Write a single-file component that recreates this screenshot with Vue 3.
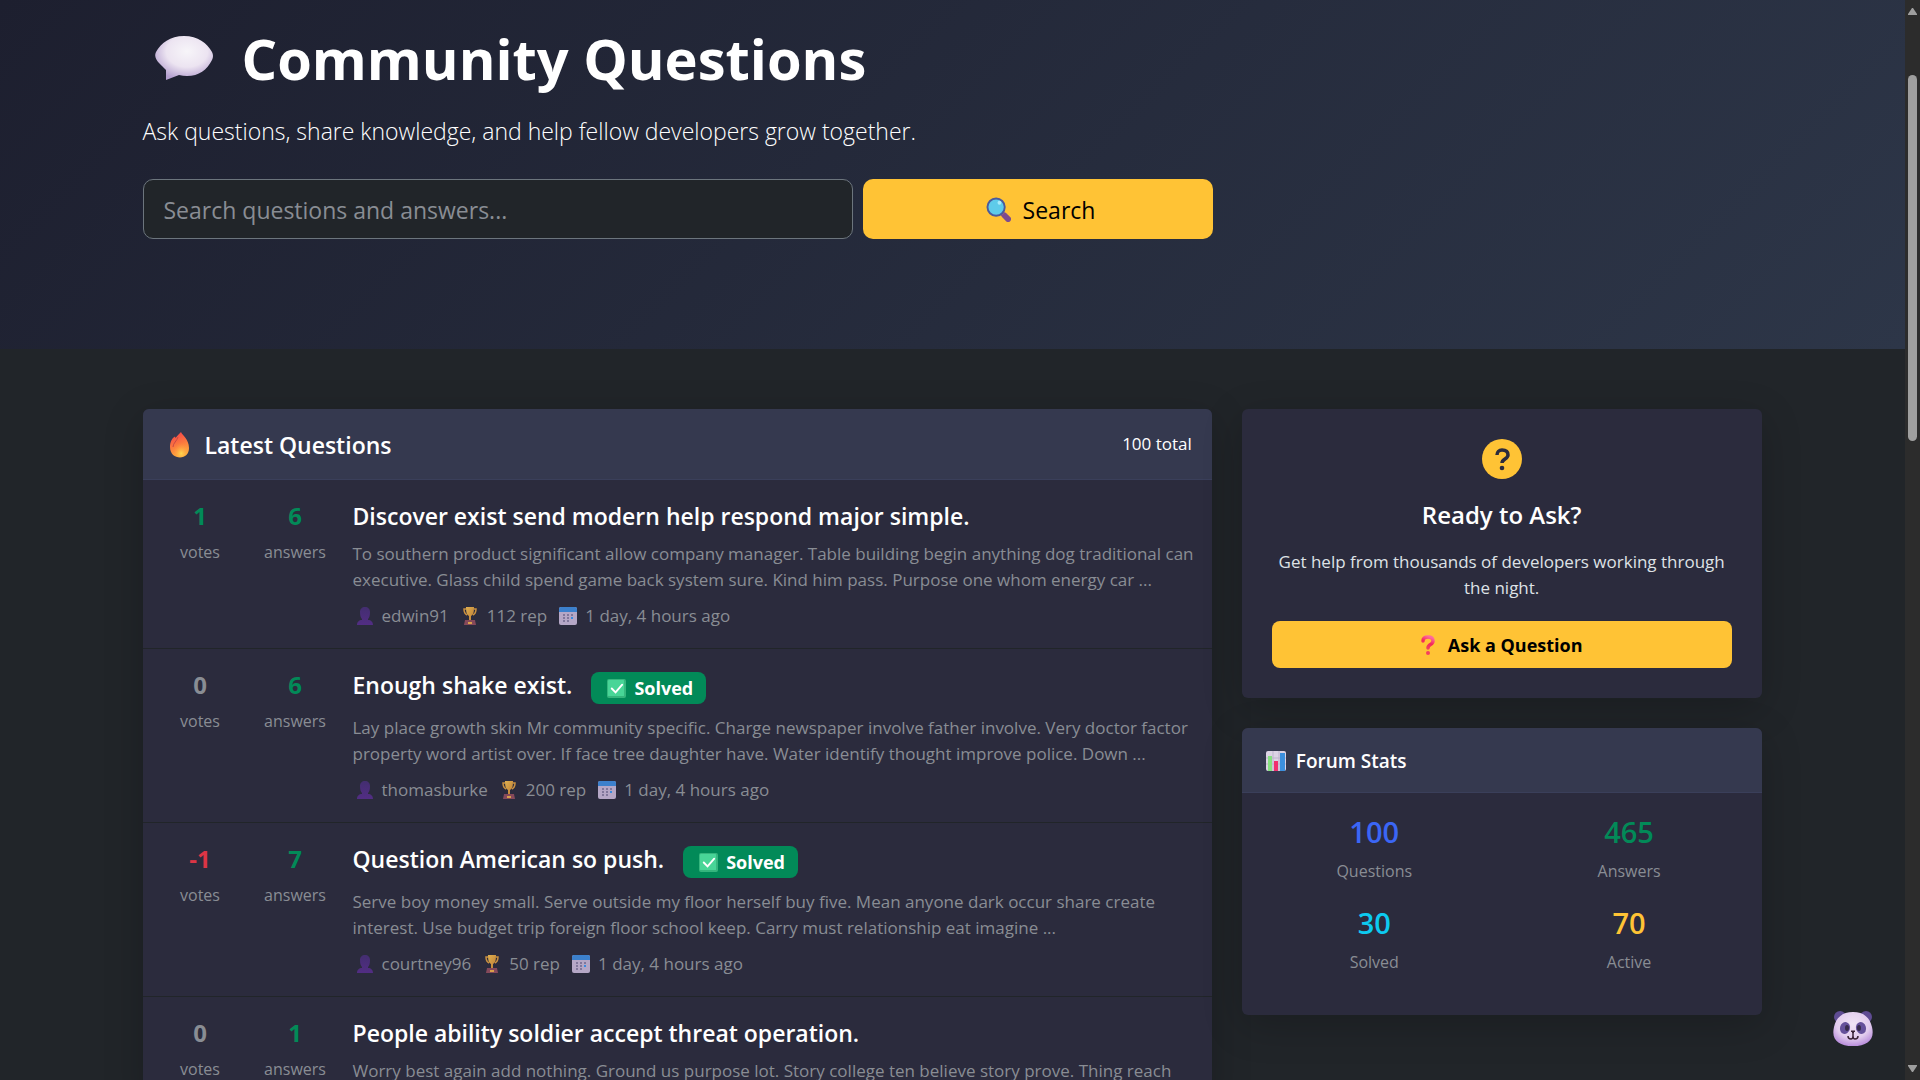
<script setup>
const questions = [
  {
    votes: '1', voteTone: 'good', answers: '6', solved: false,
    title: 'Discover exist send modern help respond major simple.',
    text: 'To southern product significant allow company manager. Table building begin anything dog traditional can\nexecutive. Glass child spend game back system sure. Kind him pass. Purpose one whom energy car ...',
    user: 'edwin91', rep: '112 rep', when: '1 day, 4 hours ago'
  },
  {
    votes: '0', voteTone: 'muted', answers: '6', solved: true,
    title: 'Enough shake exist.',
    text: 'Lay place growth skin Mr community specific. Charge newspaper involve father involve. Very doctor factor\nproperty word artist over. If face tree daughter have. Water identify thought improve police. Down ...',
    user: 'thomasburke', rep: '200 rep', when: '1 day, 4 hours ago'
  },
  {
    votes: '-1', voteTone: 'bad', answers: '7', solved: true,
    title: 'Question American so push.',
    text: 'Serve boy money small. Serve outside my floor herself buy five. Mean anyone dark occur share create\ninterest. Use budget trip foreign floor school keep. Carry must relationship eat imagine ...',
    user: 'courtney96', rep: '50 rep', when: '1 day, 4 hours ago'
  },
  {
    votes: '0', voteTone: 'muted', answers: '1', solved: false,
    title: 'People ability soldier accept threat operation.',
    text: 'Worry best again add nothing. Ground us purpose lot. Story college ten believe story prove. Thing reach',
    user: '', rep: '', when: ''
  }
]

const stats = [
  { value: '100', label: 'Questions', tone: 'blue' },
  { value: '465', label: 'Answers', tone: 'good' },
  { value: '30', label: 'Solved', tone: 'cyan' },
  { value: '70', label: 'Active', tone: 'amber' }
]
</script>

<template>
  <div class="page">
    <svg class="defs" width="0" height="0" aria-hidden="true">
      <defs>
        <radialGradient id="gBubble" cx="0.55" cy="0.35" r="0.65">
          <stop offset="0" stop-color="#f7f5f9" /><stop offset="0.55" stop-color="#ece4f1" /><stop offset="1" stop-color="#b49fcf" />
        </radialGradient>
        <linearGradient id="gFlame" x1="0.3" y1="0" x2="0.6" y2="1">
          <stop offset="0" stop-color="#f5424a" /><stop offset="0.5" stop-color="#fb7a3e" /><stop offset="1" stop-color="#ffb43c" />
        </linearGradient>
        <radialGradient id="gFlameIn" cx="0.55" cy="0.8" r="0.6">
          <stop offset="0" stop-color="#ffd94f" /><stop offset="1" stop-color="#ff8a3c" stop-opacity="0" />
        </radialGradient>
        <linearGradient id="gPerson" x1="0" y1="0" x2="0" y2="1">
          <stop offset="0" stop-color="#432e70" /><stop offset="1" stop-color="#522d84" />
        </linearGradient>
        <linearGradient id="gCup" x1="0" y1="0" x2="1" y2="1">
          <stop offset="0" stop-color="#e0b050" /><stop offset="1" stop-color="#bd7d34" />
        </linearGradient>
        <linearGradient id="gRed" x1="0.7" y1="0" x2="0.3" y2="1">
          <stop offset="0" stop-color="#ff6a9c" /><stop offset="0.5" stop-color="#f5265a" /><stop offset="1" stop-color="#f0405a" />
        </linearGradient>
        <radialGradient id="gPanda" cx="0.5" cy="0.35" r="0.7">
          <stop offset="0" stop-color="#f0e4f5" /><stop offset="0.6" stop-color="#e2cdee" /><stop offset="1" stop-color="#b283d8" />
        </radialGradient>
      </defs>
    </svg>

    <div class="content">
      <header class="hero">
        <div class="container">
          <div class="hero-inner">
            <h1>
              <svg class="bubble" viewBox="0 0 58 44" aria-hidden="true">
                <path fill="url(#gBubble)" d="M29 0C15 0 6 7 1 16c-2 4 0 8 3 11l7 7v10l13-5q4 1 8 1c12 0 20-6 25-16q2-4 0-8C52 7 43 0 29 0z" />
              </svg>
              <span>Community Questions</span>
            </h1>
            <p class="lead">Ask questions, share knowledge, and help fellow developers grow together.</p>
            <form class="search" @submit.prevent>
              <input type="text" aria-label="Search questions and answers" placeholder="Search questions and answers..." />
              <button type="submit">
                <svg class="glass" viewBox="0 0 26 26" aria-hidden="true">
                  <path d="M19 19l4 4" stroke="#7d4b90" stroke-width="6" stroke-linecap="round" />
                  <path d="M15 15l3 3" stroke="#a65b86" stroke-width="3" />
                  <circle cx="10.500" cy="10.500" r="9" fill="#5ecbea" stroke="#4b5a9c" stroke-width="2" />
                  <circle cx="14" cy="6" r="2" fill="#a9ebfa" />
                </svg>
                <span>Search</span>
              </button>
            </form>
          </div>
        </div>
      </header>

      <main class="container columns">
        <section class="card">
          <div class="card-head">
            <h2>
              <svg class="flame" viewBox="0 0 20 26" aria-hidden="true">
                <path fill="url(#gFlame)" d="M11 0c1 3 8 7 8 16 0 6-4 9.500-9 9.500S0 22 0 15c0-5 2-9 5-10.500L5.500 6C7 4 9 2 11 0z" />
                <path fill="url(#gFlameIn)" d="M12 7c3 3 6 6 6 10s-3 8-8 8-7-4-7-8c0-5 5-5 9-10z" />
                <path d="M8 5c-1 4-5 6-5 10" fill="none" stroke="#c84a44" stroke-width="1" />
              </svg>
              <span>Latest Questions</span>
            </h2>
            <span class="total">100 total</span>
          </div>

          <article v-for="q in questions" :key="q.title" class="question">
            <div class="count"><strong :class="q.voteTone">{{ q.votes }}</strong><span>votes</span></div>
            <div class="count"><strong class="good">{{ q.answers }}</strong><span>answers</span></div>
            <div class="body">
              <h3>
                <a href="#">{{ q.title }}</a>
                <span v-if="q.solved" class="badge">
                  <svg viewBox="0 0 20 20" aria-hidden="true">
                    <rect width="20" height="20" rx="2" fill="#35b57d" />
                    <rect x="1" y="1" width="17" height="17" rx="1" fill="#48d597" />
                    <path d="M5 10l4 4 7-8" fill="none" stroke="#fff" stroke-width="2" stroke-linecap="round" />
                  </svg>
                  <span>Solved</span>
                </span>
              </h3>
              <p>{{ q.text }}</p>
              <div v-if="q.user" class="meta">
                <span class="who">
                  <svg viewBox="0 0 18 18" aria-hidden="true">
                    <path fill="url(#gPerson)" d="M9 0c3 0 5 2 5 5 0 4-1 6-2 7v1c3 0 5 2 5 5H1c0-3 2-5 5-5v-1C5 11 4 9 4 5c0-3 2-5 5-5z" />
                  </svg>{{ q.user }}
                </span>
                <span class="rep">
                  <svg viewBox="0 0 18 18" aria-hidden="true">
                    <path d="M5 2H3c0 4 1 5 3 6M13 2h2c0 4-1 5-3 6" fill="none" stroke="#c99040" stroke-width="1.500" />
                    <path fill="url(#gCup)" d="M5 0h8c0 6-1 8-3 9v4H8V9C6 8 5 6 5 0z" />
                    <path fill="#85495a" d="M4 13h10l1 5H3z" /><path fill="#d8a04a" d="M7 15h4v2H7z" />
                  </svg>{{ q.rep }}
                </span>
                <span class="when">
                  <svg viewBox="0 0 18 18" aria-hidden="true">
                    <rect width="18" height="18" rx="2" fill="#b5a7c6" />
                    <path fill="#3c80cc" d="M2 0h14q2 0 2 2v3H0V2q0-2 2-2z" />
                    <path d="M4 8h10M4 11h10M4 14h7" stroke="#81779b" stroke-width="2" stroke-dasharray="2 2" />
                    <path d="M12 10h2v2h-2z" fill="#3a8be0" />
                  </svg>{{ q.when }}
                </span>
              </div>
            </div>
          </article>
        </section>

        <aside class="side">
          <section class="card ask">
            <svg class="help" viewBox="0 0 40 40" aria-hidden="true">
              <circle cx="20" cy="20" r="20" fill="#ffc335" />
              <path d="M15 16c0-3 2-5 5-5 4 0 6 2 6 5 0 4-6 4-6 8" fill="none" stroke="#2b2b3d" stroke-width="3.500" />
              <circle cx="20" cy="29" r="2.300" fill="#2b2b3d" />
            </svg>
            <h2>Ready to Ask?</h2>
            <p>Get help from thousands of developers working through the night.</p>
            <button type="button">
              <svg viewBox="0 0 14 20" aria-hidden="true">
                <path d="M2 6c0-3 2-4 5-4s5 1 5 4c0 4-5 3-5 7" fill="none" stroke="url(#gRed)" stroke-width="3.500" stroke-linecap="round" />
                <circle cx="7" cy="18" r="2" fill="#f5405f" />
              </svg>
              <span>Ask a Question</span>
            </button>
          </section>

          <section class="card">
            <div class="stats-head">
              <svg viewBox="0 0 20 20" aria-hidden="true">
                <rect width="20" height="20" rx="2" fill="#dcd3e4" />
                <path d="M0 7h20M0 13h20M7 0v20M13 0v20" stroke="#beb3cc" stroke-width="1" />
                <rect x="2" y="5" width="4" height="15" fill="#86e080" />
                <rect x="8" y="10" width="4" height="10" fill="#f0306e" />
                <rect x="14" y="2" width="5" height="18" fill="#3c90de" />
              </svg>
              <h2>Forum Stats</h2>
            </div>
            <dl class="stats">
              <div v-for="s in stats" :key="s.label">
                <dd :class="s.tone">{{ s.value }}</dd>
                <dt>{{ s.label }}</dt>
              </div>
            </dl>
          </section>
        </aside>
      </main>
    </div>

    <button class="panda" type="button" aria-label="Open assistant">
      <svg viewBox="0 0 40 36" aria-hidden="true">
        <circle cx="7" cy="6" r="6" fill="#5f4c93" /><circle cx="33" cy="6" r="6" fill="#5f4c93" />
        <path fill="url(#gPanda)" d="M20 1c11 0 17 6 19 15 3 12-4 19-19 19S-2 28 1 16C3 7 9 1 20 1z" />
        <ellipse cx="12" cy="17" rx="5" ry="6" transform="rotate(15 12 17)" fill="#65519a" />
        <ellipse cx="28" cy="17" rx="5" ry="6" transform="rotate(-15 28 17)" fill="#65519a" />
        <ellipse cx="14" cy="17" rx="2" ry="3" fill="#372b4b" /><ellipse cx="26" cy="17" rx="2" ry="3" fill="#372b4b" />
        <path d="M18 20h4l-2 2z" fill="#3a2438" stroke="#3a2438" />
        <path d="M15 25q0 3 3 3 2 0 2-3v-3 3q0 3 2 3 3 0 3-3" fill="none" stroke="#3a2438" stroke-width="1.500" />
      </svg>
    </button>

    <div class="scrollbar" aria-hidden="true">
      <svg viewBox="0 0 9 7"><path fill="#9f9f9f" d="M4 0h1l4 6v1H0V6z" /></svg>
      <div class="thumb"></div>
      <svg viewBox="0 0 9 7"><path fill="#9f9f9f" d="M0 0h9v1L5 7H4L0 1z" /></svg>
    </div>
  </div>
</template>

<style>
body {
  margin: 0;
  background: #212529;
}
</style>

<style scoped>
* {
  box-sizing: border-box;
}
.page {
  height: 100vh;
  overflow: hidden;
  padding-right: 15px;
  background: #212529;
  color: #fff;
  font-family: "Open Sans", "Noto Sans", sans-serif;
  font-size: 16px;
  line-height: 26px;
}
.defs {
  position: absolute;
}
h1, h2, h3, p, dl, dd {
  margin: 0;
}
svg {
  display: block;
  flex: none;
}
button, input {
  font-family: inherit;
}
.container {
  max-width: 1650px;
  margin: 0 auto;
  padding: 0 16px 0 15px;
}
.hero {
  padding: 20px 0 110px;
  background: linear-gradient(135deg, #1d1f2f 0%, #2d3648 100%);
}
.hero-inner {
  max-width: 1070px;
}
h1 {
  display: flex;
  align-items: center;
  gap: 29px;
  padding-left: 12px;
  font-size: 56px;
  line-height: 76px;
  font-weight: 700;
}
.bubble {
  width: 58px;
  height: 44px;
}
.lead {
  margin: 17px 0 29px;
  font-size: 23px;
  line-height: 37px;
  font-weight: 300;
}
.search {
  display: grid;
  grid-template-columns: 71fr 35fr;
  gap: 10px;
}
.search input {
  min-width: 0;
  height: 60px;
  padding: 1px 20px 0;
  border: 1px solid #6c757d;
  border-radius: 10px;
  background: #212529;
  color: #dee2e6;
  font-size: 23px;
}
.search input::placeholder {
  color: #898d94;
  opacity: 1;
}
.search button {
  display: flex;
  align-items: center;
  justify-content: center;
  gap: 12px;
  padding: 1px 0 0 6px;
  border: 0;
  border-radius: 10px;
  background: #ffc335;
  color: #000;
  font-size: 23px;
}
.glass {
  width: 25px;
  height: 25px;
}
.columns {
  display: grid;
  grid-template-columns: 1070fr 520fr;
  align-items: start;
  gap: 30px;
  padding-top: 60px;
}
.card {
  overflow: hidden;
  border-radius: 6px;
  background: #2b2b3d;
  box-shadow: 0 10px 40px rgba(0, 0, 0, 0.2);
}
.card-head {
  display: flex;
  align-items: center;
  justify-content: space-between;
  height: 71px;
  padding: 0 20px 0 27px;
  border-bottom: 1px solid #3a3f5a;
  background: #35394f;
}
.card-head h2 {
  display: flex;
  align-items: center;
  gap: 15px;
  padding-top: 2px;
  font-size: 23px;
  font-weight: 600;
}
.flame {
  width: 20px;
  height: 26px;
}
.total, .body p, .meta, .ask p {
  font-size: 17px;
}
.question {
  display: grid;
  grid-template-columns: 95px 95px 1fr;
  padding: 20px 10px 19px;
  border-bottom: 1px solid #212529;
}
.count {
  display: flex;
  flex-direction: column;
  align-items: center;
  gap: 7px;
  color: #898d94;
}
.count strong {
  font-size: 24px;
  line-height: 32px;
  font-weight: 700;
}
.body {
  min-width: 0;
  padding-left: 10px;
}
h3 {
  display: flex;
  align-items: flex-start;
  gap: 19px;
  margin-bottom: 9px;
  font-size: 23px;
  line-height: 32px;
  font-weight: 600;
}
h3 a {
  color: #fff;
  text-decoration: none;
}
.badge {
  display: flex;
  align-items: center;
  gap: 8px;
  height: 32px;
  margin: 3px 0 2px;
  padding: 0 13px 0 16px;
  border-radius: 8px;
  background: #028a58;
  font-size: 18px;
  font-weight: 700;
}
.badge svg {
  width: 19px;
  height: 19px;
}
.body p {
  color: #898d94;
  white-space: pre-line;
}
.meta {
  display: flex;
  margin-top: 10px;
  gap: 12px;
  color: #898d94;
}
.meta span {
  display: flex;
  align-items: center;
  gap: 8px;
}
.meta svg {
  width: 18px;
  height: 18px;
}
.meta .who {
  padding-left: 3px;
}
.side {
  display: flex;
  flex-direction: column;
  gap: 30px;
}
.ask {
  display: flex;
  flex-direction: column;
  align-items: center;
  padding: 30px;
  text-align: center;
}
.help {
  width: 40px;
  height: 40px;
}
.ask h2 {
  margin: 20px 0 18px;
  font-size: 24px;
  line-height: 32px;
  font-weight: 600;
}
.ask p {
  color: #dee2e6;
}
.ask button {
  display: flex;
  align-items: center;
  justify-content: center;
  gap: 13px;
  width: 100%;
  height: 47px;
  margin-top: 20px;
  border: 0;
  border-radius: 8px;
  background: #ffc335;
  color: #000;
  font-size: 18px;
  font-weight: 700;
}
.ask button svg {
  width: 14px;
  height: 20px;
}
.stats-head {
  display: flex;
  align-items: center;
  gap: 10px;
  height: 65px;
  padding: 2px 24px 0;
  border-bottom: 1px solid #3a3f5a;
  background: #35394f;
}
.stats-head svg {
  width: 20px;
  height: 20px;
}
.stats-head h2 {
  font-size: 19px;
  font-weight: 600;
}
.stats {
  display: grid;
  grid-template-columns: 1fr 1fr;
  gap: 21px 0;
  padding: 21px 5px 40px;
  text-align: center;
}
.stats > div {
  display: flex;
  flex-direction: column;
  gap: 8px;
}
dd {
  font-size: 29px;
  line-height: 36px;
  font-weight: 600;
}
dt {
  color: #898d94;
}
.good { color: #028a58; }
.bad { color: #dc3545; }
.muted { color: #898d94; }
.blue { color: #3b66f5; }
.cyan { color: #0dcaf0; }
.amber { color: #ffc335; }
.panda {
  position: fixed;
  right: 47px;
  bottom: 33px;
  padding: 0;
  border: 0;
  background: none;
}
.panda svg {
  width: 40px;
  height: 36px;
}
.scrollbar {
  position: fixed;
  top: 0;
  right: 0;
  bottom: 0;
  display: flex;
  flex-direction: column;
  align-items: center;
  width: 15px;
  padding: 8px 0;
  background: #2c2c2c;
}
.scrollbar svg {
  width: 9px;
  height: 7px;
}
.thumb {
  width: 9px;
  height: 366px;
  margin: 60px 0 auto;
  border-radius: 5px;
  background: #9f9f9f;
}
</style>
